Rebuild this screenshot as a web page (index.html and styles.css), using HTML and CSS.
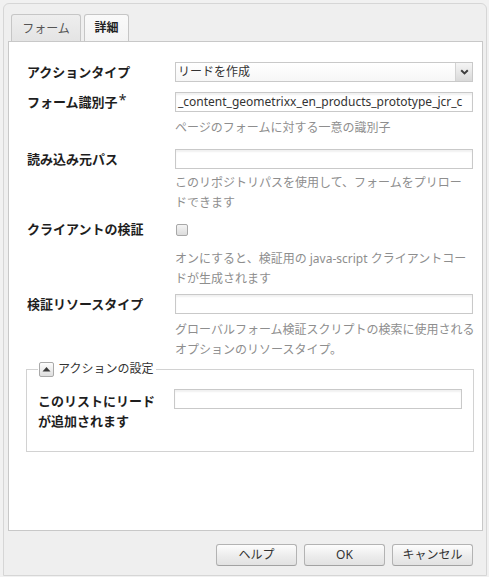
FILE: index.html
```html
<!DOCTYPE html>
<html lang="ja">
<head>
<meta charset="utf-8">
<title>詳細</title>
<link rel="stylesheet" href="styles.css">
</head>
<body>
<div class="window">
  <div class="tabs">
    <div class="tab">フォーム</div>
    <div class="tab active">詳細</div>
  </div>
  <div class="panel">
    <div class="form">
      <div class="row r1">
        <div class="lbl">アクションタイプ</div>
        <div class="field">
          <div class="select">
            <span class="sel-text">リードを作成</span>
            <span class="arrow"><svg width="9" height="6" viewBox="0 0 9 6"><path d="M1.2 1.2 L4.5 4.4 L7.8 1.2" fill="none" stroke="#3e3e3e" stroke-width="2"/></svg></span>
          </div>
        </div>
      </div>
      <div class="row r2">
        <div class="lbl">フォーム識別子<span class="req">*</span></div>
        <div class="field">
          <div class="input"><span class="val">_content_geometrixx_en_products_prototype_jcr_c</span></div>
          <div class="hint h2">ページのフォームに対する一意の識別子</div>
        </div>
      </div>
      <div class="row r3">
        <div class="lbl">読み込み元パス</div>
        <div class="field">
          <div class="input"></div>
          <div class="hint h3">このリポジトリパスを使用して、フォームをプリロー<br>ドできます</div>
        </div>
      </div>
      <div class="row r4">
        <div class="lbl">クライアントの検証</div>
        <div class="field">
          <div class="check"><span class="box"></span></div>
          <div class="hint h4">オンにすると、検証用の java-script クライアントコー<br>ドが生成されます</div>
        </div>
      </div>
      <div class="row r5">
        <div class="lbl">検証リソースタイプ</div>
        <div class="field">
          <div class="input"></div>
          <div class="hint h5">グローバルフォーム検証スクリプトの検索に使用される<br>オプションのリソースタイプ。</div>
        </div>
      </div>
      <fieldset class="fs">
        <legend class="legend"><span class="toggle"><svg width="9" height="6" viewBox="0 0 9 6"><path d="M0.5 5.5 L4.5 1 L8.5 5.5 Z" fill="#3a3a3a"/></svg></span><span class="legend-text">アクションの設定</span></legend>
        <div class="row fs-row">
          <div class="lbl lbl2">このリストにリード<br>が追加されます</div>
          <div class="field">
            <div class="input input2"></div>
          </div>
        </div>
      </fieldset>
    </div>
  </div>
  <div class="footer">
    <button class="btn">ヘルプ</button>
    <button class="btn">OK</button>
    <button class="btn">キャンセル</button>
  </div>
</div>
</body>
</html>
```

FILE: styles.css
```css
html, body {
  margin: 0;
  padding: 0;
  background: #f1f1f1;
}
body {
  width: 489px;
  height: 577px;
  overflow: hidden;
  font-family: "Noto Sans", "Noto Sans CJK JP", sans-serif;
  color: #222;
}
.window {
  box-sizing: border-box;
  width: 484px;
  height: 573px;
  margin: 3px 2px 1px 3px;
  border: 1px solid #d6d6d6;
  border-radius: 6px 6px 0 0;
  background: #efefef;
  padding: 0 3px 0 4px;
  display: flex;
  flex-direction: column;
}
.tabs {
  height: 37px;
  box-sizing: border-box;
  padding: 10px 0 0 3px;
  display: flex;
  gap: 3px;
  align-items: flex-end;
}
.tab {
  box-sizing: border-box;
  height: 27px;
  border: 1px solid #c6c6c6;
  border-bottom: none;
  border-radius: 3px 3px 0 0;
  background: linear-gradient(#eeeeee, #e4e4e4);
  font-size: 12px;
  color: #555;
  line-height: 25px;
  padding: 1px 10px 0;
  width: 70px;
  text-align: center;
}
.tab.active {
  width: 45px;
  padding: 0 8px;
  background: linear-gradient(#fafafa, #f3f3f3);
  color: #222;
  font-weight: bold;
}
.panel {
  box-sizing: border-box;
  width: 475px;
  height: 490px;
  border: 1px solid #c8c8c8;
  background: #fff;
}
.form {
  padding: 20px 9px 0 18px;
}
.row {
  display: grid;
  grid-template-columns: 148px 298px;
}
.r2 { margin-top: 10px; }
.r3 { margin-top: 11px; }
.r4 { margin-top: 6px; }
.r5 { margin-top: 6px; }
.lbl {
  font-size: 13px;
  font-weight: bold;
  line-height: 20px;
  color: #1e1e1e;
  white-space: nowrap;
}
.req {
  font-weight: normal;
  font-size: 14px;
  position: relative;
  top: -2px;
  margin-left: 1px;
}
.field {
  min-width: 0;
}
.select, .input {
  box-sizing: border-box;
  height: 20px;
  border: 1px solid #c9c9c9;
  background: #fff;
  box-shadow: inset 0 2px 2px rgba(0, 0, 0, 0.06);
  display: flex;
  align-items: center;
  overflow: hidden;
}
.select {
  justify-content: space-between;
  background: linear-gradient(#ffffff, #f6f6f6);
  box-shadow: none;
}
.sel-text, .val {
  font-size: 12px;
  color: #333;
  padding-left: 2px;
  white-space: nowrap;
  line-height: 18px;
}
.arrow {
  box-sizing: border-box;
  width: 17px;
  height: 18px;
  border-left: 1px solid #d2d2d2;
  background: linear-gradient(#f5f5f5, #d9d9d9);
  display: flex;
  align-items: center;
  justify-content: center;
}
.hint {
  font-size: 12px;
  line-height: 20px;
  color: #8e8e8e;
  white-space: nowrap;
}
.h2 { margin-top: 6px; }
.h3 { margin-top: 4px; }
.h4 { margin-top: 10px; line-height: 19.5px; }
.h5 { margin-top: 6px; line-height: 19.5px; }
.check {
  height: 20px;
  display: flex;
  align-items: center;
}
.box {
  box-sizing: border-box;
  width: 12px;
  height: 12px;
  margin-left: 1px;
  margin-top: 2px;
  border: 1px solid #a8a8a8;
  border-radius: 2px;
  background: linear-gradient(#f4f4f4, #dcdcdc);
}
.fs {
  box-sizing: border-box;
  width: 448px;
  margin: 2px 0 0 -1px;
  padding: 12px 11px 20px 11px;
  border: 1px solid #d2d2d2;
  min-width: 0;
}
.legend {
  padding: 0 3px 0 1px;
  margin-left: 0;
  height: 16px;
  display: flex;
  align-items: center;
  gap: 4px;
}
.toggle {
  box-sizing: border-box;
  width: 15px;
  height: 15px;
  border: 1px solid #a9a9a9;
  border-radius: 2px;
  background: linear-gradient(#fdfdfd, #dedede);
  display: flex;
  align-items: center;
  justify-content: center;
}
.legend-text {
  font-size: 12px;
  color: #333;
  line-height: 16px;
}
.fs-row {
  grid-template-columns: 136px 288px;
}
.lbl2 {
  padding-top: 2px;
}
.footer {
  flex: 1;
  display: flex;
  justify-content: flex-end;
  align-items: flex-start;
  gap: 7px;
  padding: 13px 10px 0 0;
}
.btn {
  box-sizing: border-box;
  width: 81px;
  height: 22px;
  margin: 0;
  padding: 0;
  border: 1px solid #b3b3b3;
  border-bottom-color: #a2a2a2;
  border-radius: 3px;
  background: linear-gradient(#fdfdfd, #ececec 55%, #e2e2e2);
  font-family: "Noto Sans", "Noto Sans CJK JP", sans-serif;
  font-size: 12px;
  color: #333;
  line-height: 20px;
}
```
